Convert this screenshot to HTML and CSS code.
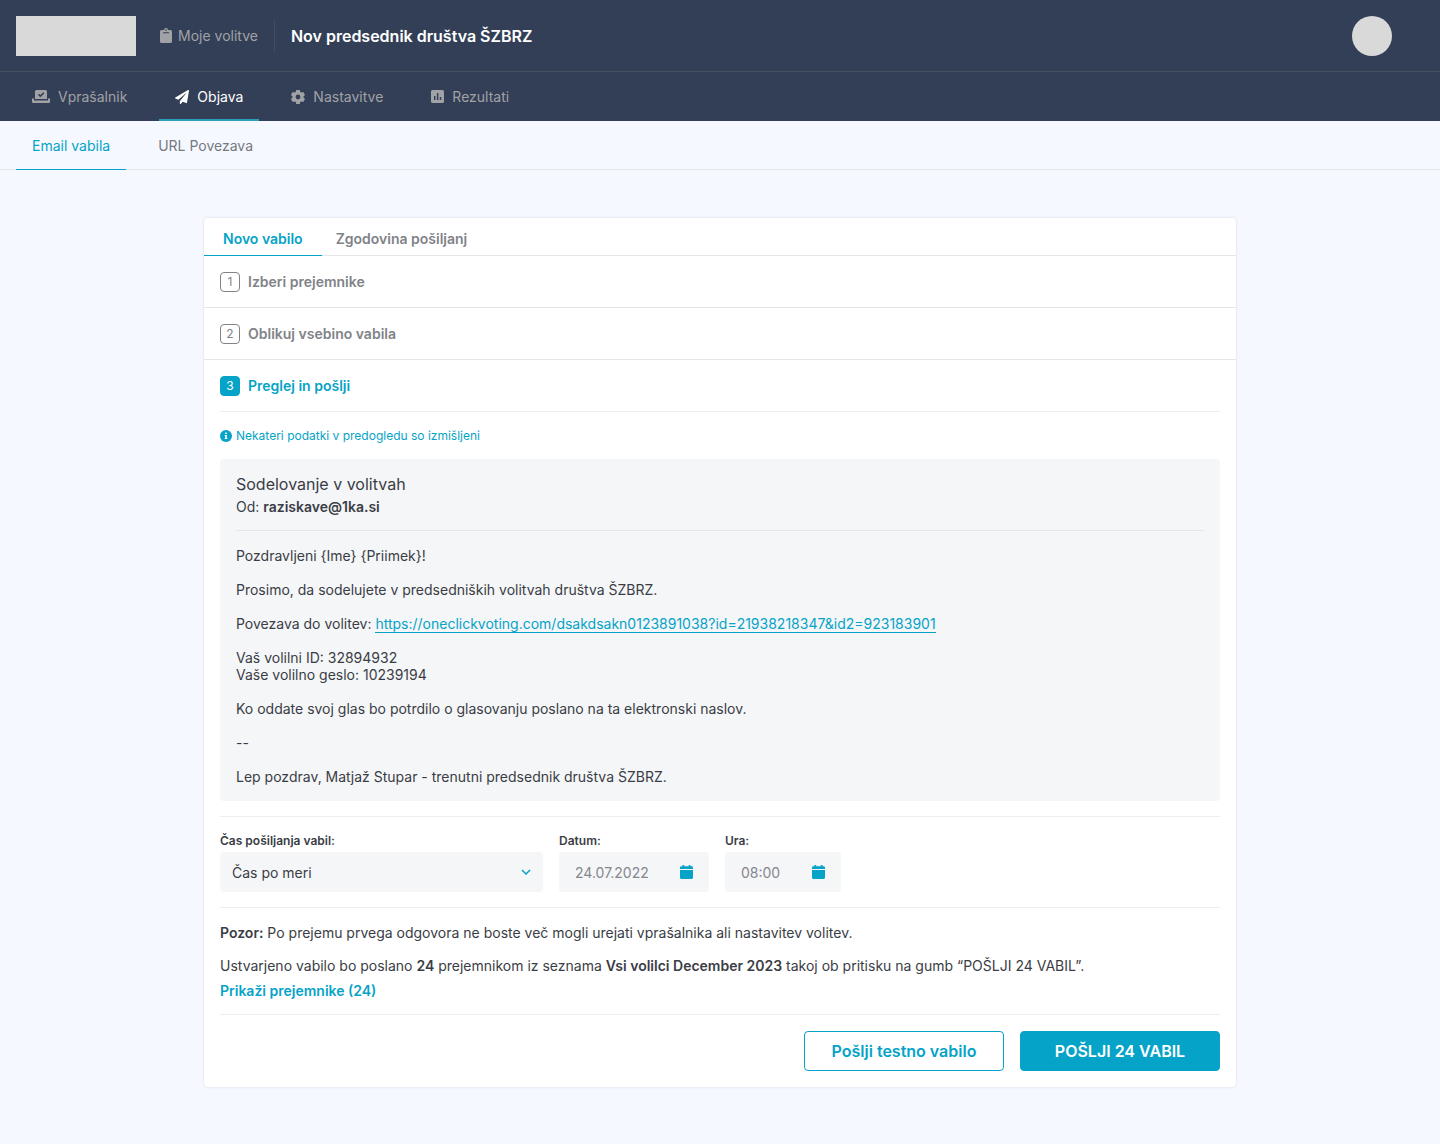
FILE: index.html
```html
<!DOCTYPE html>
<html lang="sl">
<head>
    <meta charset="UTF-8">
    <meta name="viewport" content="width=device-width, initial-scale=1.0">
    <title>Nov predsednik društva ŠZBRZ</title>
    <link rel="stylesheet" href="styles.css">
</head>
<body>
    <header class="header">
        <div class="topbar">
            <div class="logo"></div>
            <a class="my-votes" href="#">
                <svg width="12" height="16" viewBox="0 0 12 16" fill="currentColor"><path fill-rule="evenodd" d="M10.5 2H8a2 2 0 0 0-4 0H1.500A1.500 1.500 0 0 0 0 3.500v10A1.500 1.500 0 0 0 1.500 15h9a1.500 1.500 0 0 0 1.500-1.500v-10A1.500 1.500 0 0 0 10.500 2zM6 1.300a.8.8 0 1 1 0 1.600.8.8 0 0 1 0-1.600zM3 4.200h6v1H3z"/></svg>
                Moje volitve
            </a>
            <h1 class="title">Nov predsednik društva ŠZBRZ</h1>
            <div class="avatar"></div>
        </div>
        <nav class="nav">
            <a class="nav-item" href="#">
                <svg width="18" height="14" viewBox="0 0 18 14" fill="currentColor"><path fill-rule="evenodd" d="M4.500 0h9A1.500 1.500 0 0 1 15 1.500V9H3V1.500A1.500 1.500 0 0 1 4.500 0zM8.400 7.300l4-4-1.100-1.100-2.900 2.900-1.300-1.300L6 4.900zM0 8.500h2v2h14v-2h2V12a1 1 0 0 1-1 1H1a1 1 0 0 1-1-1z"/></svg>
                Vprašalnik
            </a>
            <a class="nav-item active" href="#">
                <svg width="14" height="14" viewBox="0 0 512 512" fill="currentColor"><path d="M476 3.200 12.500 270.600c-18.100 10.400-15.800 35.600 2.200 43.200L121 358.400l287.300-253.200c5.500-4.900 13.300 2.600 8.600 8.300L176 407v80.500c0 23.600 28.500 32.900 42.500 15.800L282 426l124.600 52.200c14.200 6 30.400-2.900 33-18.200l72-432C515 7.800 493.300-6.800 476 3.200z"/></svg>
                Objava
            </a>
            <a class="nav-item" href="#">
                <svg width="14" height="14" viewBox="0 0 14 14" fill="currentColor"><path fill-rule="evenodd" d="M5.200 0h3.600l.4 2 1.100.6 2-.7L14 5l-1.500 1.400v1.200L14 9l-1.700 3.100-2-.7-1.100.6-.4 2H5.200l-.4-2-1.100-.6-2 .7L0 9l1.500-1.400V6.400L0 5l1.700-3.100 2 .7L4.800 2zM7 4.600a2.400 2.400 0 1 0 0 4.800 2.400 2.400 0 0 0 0-4.800z"/></svg>
                Nastavitve
            </a>
            <a class="nav-item" href="#">
                <svg width="13" height="13" viewBox="0 0 13 13" fill="currentColor"><path fill-rule="evenodd" d="M1.500 0h10A1.500 1.500 0 0 1 13 1.500v10a1.500 1.500 0 0 1-1.500 1.500h-10A1.500 1.500 0 0 1 0 11.500v-10A1.500 1.500 0 0 1 1.500 0zM3 6v4h1.500V6zm2.900-3v7h1.500V3zm2.900 4v3h1.500V7z"/></svg>
                Rezultati
            </a>
        </nav>
    </header>

    <nav class="subnav">
        <a class="subnav-item active" href="#">Email vabila</a>
        <a class="subnav-item" href="#">URL Povezava</a>
    </nav>

    <main class="card">
        <div class="card-tabs">
            <a class="card-tab active" href="#">Novo vabilo</a>
            <a class="card-tab" href="#">Zgodovina pošiljanj</a>
        </div>

        <h2 class="step"><span class="number">1</span>Izberi prejemnike</h2>
        <h2 class="step"><span class="number">2</span>Oblikuj vsebino vabila</h2>

        <div class="step-content">
            <h2 class="step active"><span class="number">3</span>Preglej in pošlji</h2>
            <p class="info">
                <svg width="12" height="12" viewBox="0 0 12 12"><circle cx="6" cy="6" r="6" fill="currentColor"/><path d="M5.200 2.500h1.600v1.500H5.200zM4.700 5h2.100v3h.6v1H4.700V8h.5V6h-.5z" fill="#fff"/></svg>
                Nekateri podatki v predogledu so izmišljeni
            </p>

            <!-- Predogled vabila -->
            <article class="preview">
                <header class="preview-header">
                    <h3>Sodelovanje v volitvah</h3>
                    <p>Od: <strong>raziskave@1ka.si</strong></p>
                </header>
                <p>Pozdravljeni {Ime} {Priimek}!</p>
                <p>Prosimo, da sodelujete v predsedniških volitvah društva ŠZBRZ.</p>
                <p>Povezava do volitev: <a href="#">https://oneclickvoting.com/dsakdsakn0123891038?id=21938218347&amp;id2=923183901</a></p>
                <p>Vaš volilni ID: 32894932<br>Vaše volilno geslo: 10239194</p>
                <p>Ko oddate svoj glas bo potrdilo o glasovanju poslano na ta elektronski naslov.</p>
                <p>--</p>
                <p>Lep pozdrav, Matjaž Stupar - trenutni predsednik društva ŠZBRZ.</p>
            </article>

            <form class="schedule">
                <div class="field field-when">
                    <label for="when">Čas pošiljanja vabil:</label>
                    <div class="control">
                        <select id="when">
                            <option>Čas po meri</option>
                        </select>
                        <svg class="chevron" width="10" height="6" viewBox="0 0 10 6" fill="none" stroke="currentColor" stroke-width="1.500"><path d="M1 1l4 4 4-4"/></svg>
                    </div>
                </div>
                <div class="field field-date">
                    <label for="date">Datum:</label>
                    <div class="control">
                        <input type="text" id="date" value="24.07.2022">
                        <svg class="calendar" width="13" height="14" viewBox="0 0 13 14" fill="currentColor"><path d="M0 5h13v7.500a1.500 1.500 0 0 1-1.500 1.500h-10A1.500 1.500 0 0 1 0 12.500zM0 4V2.500A1.300 1.300 0 0 1 1.300 1.300H2.500V0h1.700v1.300h4.600V0h1.700v1.300h1.200A1.300 1.300 0 0 1 13 2.500V4z"/></svg>
                    </div>
                </div>
                <div class="field field-time">
                    <label for="time">Ura:</label>
                    <div class="control">
                        <input type="text" id="time" value="08:00">
                        <svg class="calendar" width="13" height="14" viewBox="0 0 13 14" fill="currentColor"><path d="M0 5h13v7.500a1.500 1.500 0 0 1-1.500 1.500h-10A1.500 1.500 0 0 1 0 12.500zM0 4V2.500A1.300 1.300 0 0 1 1.300 1.300H2.500V0h1.700v1.300h4.600V0h1.700v1.300h1.200A1.300 1.300 0 0 1 13 2.500V4z"/></svg>
                    </div>
                </div>
            </form>

            <div class="summary">
                <p><strong>Pozor:</strong> Po prejemu prvega odgovora ne boste več mogli urejati vprašalnika ali nastavitev volitev.</p>
                <p>Ustvarjeno vabilo bo poslano <strong>24</strong> prejemnikom iz seznama <strong>Vsi volilci December 2023</strong> takoj ob pritisku na gumb “POŠLJI 24 VABIL”.</p>
                <a href="#">Prikaži prejemnike (24)</a>
            </div>

            <div class="actions">
                <button type="button" class="button">Pošlji testno vabilo</button>
                <button type="button" class="button primary">POŠLJI 24 VABIL</button>
            </div>
        </div>
    </main>
</body>
</html>
```
FILE: styles.css
```css
* {
    box-sizing: border-box;
}

body {
    margin: 0;
    background: #f5f8ff;
    color: #3a3d45;
    font-family: Inter, "Liberation Sans", sans-serif;
    font-size: 14px;
    line-height: 17px;
}

h1, h2, h3, p {
    margin: 0;
}

a {
    text-decoration: none;
}

strong {
    font-weight: 600;
}

/* Glava */
.header {
    background: #333f56;
    color: #a0a2a6;
}

.topbar {
    display: flex;
    align-items: center;
    height: 72px;
    padding: 0 48px 0 16px;
    border-bottom: 1px solid #454f5f;
}

.logo {
    width: 120px;
    height: 40px;
    background: #d9d9d9;
}

.my-votes {
    display: flex;
    align-items: center;
    gap: 6px;
    height: 32px;
    margin-left: 24px;
    padding-right: 16px;
    border-right: 1px solid #434d5d;
    color: inherit;
}

.title {
    margin-left: 16px;
    color: #fff;
    font-size: 16px;
    font-weight: 600;
    line-height: 20px;
}

.avatar {
    width: 40px;
    height: 40px;
    margin-left: auto;
    border-radius: 50%;
    background: #d9d9d9;
}

.nav {
    display: flex;
    gap: 16px;
    padding: 0 16px;
}

.nav-item {
    display: flex;
    align-items: center;
    gap: 8px;
    height: 49px;
    padding: 2px 16px 0;
    border-bottom: 2px solid transparent;
    color: inherit;
}

.nav-item.active {
    border-bottom-color: #2b9fb5;
    color: #fff;
}

.subnav {
    display: flex;
    gap: 16px;
    padding: 0 16px;
    border-bottom: 1px solid #e2e5e9;
}

.subnav-item {
    height: 49px;
    margin-bottom: -1px;
    padding: 16px 16px 0;
    color: #76797f;
}

.subnav-item.active {
    border-bottom: 1px solid #05a3c7;
    color: #05a3c7;
}

/* Kartica */
.card {
    max-width: 1032px;
    margin: 48px auto;
    border-radius: 4px;
    background: #fff;
    box-shadow: 0 0 3px rgba(0, 0, 0, 0.12);
}

.card-tabs {
    display: flex;
    border-bottom: 1px solid #e3e5e6;
}

.card-tab {
    height: 38px;
    margin-bottom: -1px;
    padding: 12px 14px 0;
    color: #808388;
    font-weight: 600;
}

.card-tab.active {
    padding: 12px 19px 0;
    border-bottom: 1px solid #05a3c7;
    color: #05a3c7;
}

.step {
    display: flex;
    align-items: center;
    gap: 8px;
    height: 52px;
    padding: 0 16px;
    border-bottom: 1px solid #e3e5e6;
    color: #808388;
    font-size: 14px;
    font-weight: 600;
}

.step.active {
    padding: 0;
    border-color: #eceeef;
    color: #05a3c7;
}

.number {
    width: 20px;
    height: 20px;
    border: 1px solid #808388;
    border-radius: 4px;
    font-size: 12px;
    font-weight: 400;
    line-height: 18px;
    text-align: center;
}

.step.active .number {
    border-color: #05a3c7;
    background: #05a3c7;
    color: #fff;
}

.step-content {
    padding: 0 16px 16px;
}

.info {
    display: flex;
    align-items: center;
    gap: 4px;
    margin: 16px 0;
    color: #05a3c7;
    font-size: 12px;
    line-height: 15px;
}

/* Predogled vabila */
.preview {
    margin-bottom: 15px;
    padding: 16px;
    border-radius: 4px;
    background: #f5f6f8;
}

.preview-header {
    margin-bottom: 16px;
    padding-bottom: 15px;
    border-bottom: 1px solid #e3e5e6;
}

.preview h3 {
    margin-bottom: 4px;
    font-size: 16px;
    font-weight: 400;
    line-height: 19px;
}

.preview > p + p {
    margin-top: 17px;
}

.preview a {
    border-bottom: 1px solid #05a3c7;
    color: #05a3c7;
}

/* Čas pošiljanja */
.schedule {
    display: flex;
    gap: 16px;
    padding: 16px 0 15px;
    border-top: 1px solid #eceeef;
}

.field label {
    display: block;
    margin-bottom: 4px;
    font-size: 12px;
    font-weight: 600;
    line-height: 15px;
}

.field-when {
    width: 323px;
}

.field-date {
    width: 150px;
}

.field-time {
    width: 116px;
}

.control {
    position: relative;
    color: #05a3c7;
}

.control input,
.control select {
    display: block;
    width: 100%;
    height: 40px;
    padding: 0 40px 0 16px;
    border: none;
    border-radius: 4px;
    background: #f5f6f8;
    color: #84878c;
    font-family: inherit;
    font-size: 14px;
}

.control select {
    padding-left: 12px;
    appearance: none;
    color: #3a3d45;
}

.chevron {
    position: absolute;
    top: 17px;
    right: 12px;
}

.calendar {
    position: absolute;
    top: 13px;
    right: 16px;
}

.summary {
    padding: 16px 0 15px;
    border-top: 1px solid #eceeef;
    border-bottom: 1px solid #eceeef;
}

.summary p + p {
    margin-top: 16px;
}

.summary a {
    display: inline-block;
    margin-top: 8px;
    color: #05a3c7;
    font-weight: 600;
}

.actions {
    display: flex;
    justify-content: flex-end;
    gap: 16px;
    padding-top: 16px;
}

.button {
    width: 200px;
    height: 40px;
    border: 1px solid #05a3c7;
    border-radius: 4px;
    background: #fff;
    color: #05a3c7;
    font-family: inherit;
    font-size: 16px;
    font-weight: 600;
    cursor: pointer;
}

.button.primary {
    background: #05a3c7;
    color: #fff;
}
```
